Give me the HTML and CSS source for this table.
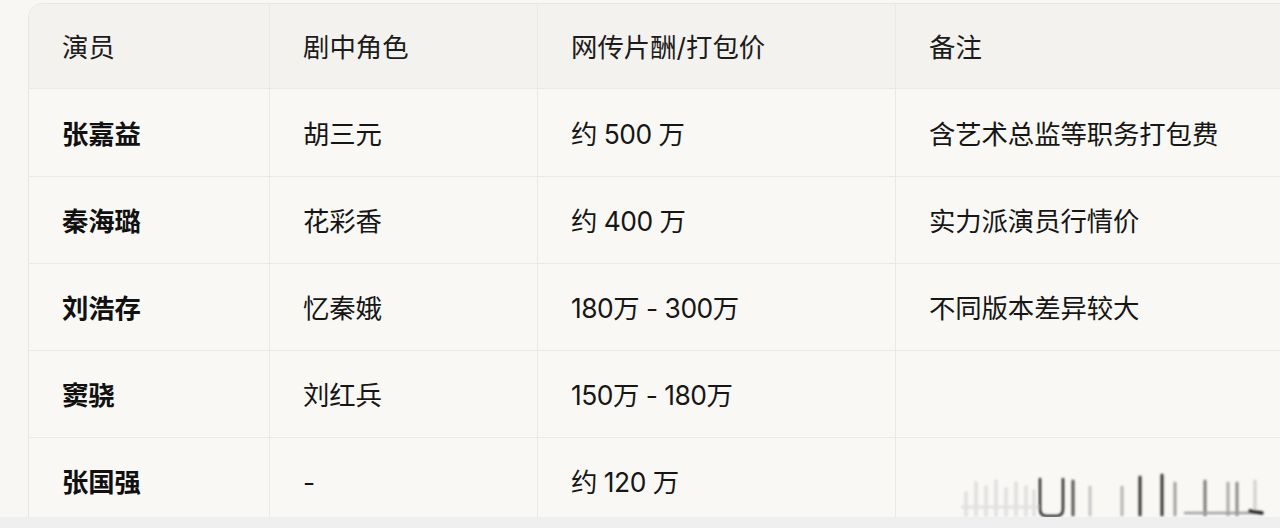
FILE: index.html
```html
<!DOCTYPE html>
<html lang="zh-CN">
<head>
<meta charset="utf-8">
<title>片酬表</title>
<link rel="stylesheet" href="styles.css">
</head>
<body>
<div class="page">
  <div class="table-wrap">
    <table class="fee-table">
      <colgroup>
        <col class="c1"><col class="c2"><col class="c3"><col class="c4">
      </colgroup>
      <thead>
        <tr><th>演员</th><th>剧中角色</th><th>网传片酬/打包价</th><th>备注</th></tr>
      </thead>
      <tbody>
        <tr class="first"><td class="name">张嘉益</td><td>胡三元</td><td class="price">约 500 万</td><td>含艺术总监等职务打包费</td></tr>
        <tr><td class="name">秦海璐</td><td>花彩香</td><td class="price">约 400 万</td><td>实力派演员行情价</td></tr>
        <tr><td class="name">刘浩存</td><td>忆秦娥</td><td class="price">180万 - 300万</td><td>不同版本差异较大</td></tr>
        <tr><td class="name">窦骁</td><td>刘红兵</td><td class="price">150万 - 180万</td><td></td></tr>
        <tr><td class="name">张国强</td><td>-</td><td class="price">约 120 万</td><td></td></tr>
      </tbody>
    </table>
    <svg class="watermark" width="310" height="50" viewBox="0 0 310 50" aria-hidden="true">
      <defs><filter id="bl" x="-20%" y="-20%" width="140%" height="140%"><feGaussianBlur stdDeviation="1.3"/></filter></defs>
      <g filter="url(#bl)" fill="none" stroke-linecap="round">
        <g stroke="#e2e2e2" stroke-width="4">
          <path d="M6 22 V44"/><path d="M16 12 V44"/><path d="M26 16 V44"/><path d="M36 10 V44"/><path d="M46 18 V44"/><path d="M56 12 V44"/><path d="M66 16 V44"/><path d="M74 20 V44"/>
          <path d="M2 36 H78" stroke-width="3"/>
        </g>
        <path d="M80 8 V38 Q80 45 87 45 H96 Q103 45 103 38 V8" stroke="#2a2a2a" stroke-width="2.5"/>
        <path d="M113 10 V44" stroke="#555" stroke-width="3"/>
        <path d="M130 16 V44" stroke="#c4c4c4" stroke-width="3"/>
        <path d="M162 16 V44" stroke="#b4b4b4" stroke-width="3"/>
        <path d="M180 6 V44" stroke="#333" stroke-width="3"/>
        <path d="M202 4 V44" stroke="#333" stroke-width="3"/>
        <path d="M215 12 V44" stroke="#a0a0a0" stroke-width="3"/>
        <path d="M245 10 V44" stroke="#7a7a7a" stroke-width="3"/>
        <path d="M268 12 V44" stroke="#aaa" stroke-width="3"/>
        <path d="M277 12 V44" stroke="#8a8a8a" stroke-width="3"/>
        <path d="M295 10 V40" stroke="#d0d0d0" stroke-width="3"/>
        <path d="M225 42 H300" stroke="#a0a0a0" stroke-width="2.5"/>
        <path d="M290 40 L302 42" stroke="#222" stroke-width="3.5"/>
      </g>
    </svg>
  </div>
  <div class="bottom-strip"></div>
</div>
</body>
</html>
```

FILE: styles.css
```css
html, body {
  margin: 0;
  padding: 0;
}
body {
  background: #f8f7f3;
  font-family: "Inter", "Noto Sans CJK SC", sans-serif;
  color: #161616;
}
.page {
  width: 1280px;
  height: 528px;
  overflow: hidden;
  display: flex;
  flex-direction: column;
}
.table-wrap {
  position: relative;
  height: 514px;
  margin-top: 3px;
  padding-left: 28px;
  overflow: hidden;
}
.fee-table {
  border-collapse: separate;
  border-spacing: 0;
  width: 1300px;
  table-layout: fixed;
  background: #f9f8f5;
  border-top: 1px solid #e8e6e1;
  border-left: 1px solid #e8e6e1;
  border-top-left-radius: 15px;
  font-size: 26.4px;
  line-height: 1;
}
.c1 { width: 241px; }
.c2 { width: 268px; }
.c3 { width: 358px; }
.c4 { width: 433px; }
.fee-table th,
.fee-table td {
  text-align: left;
  padding: 3px 0 0 33px;
  border-right: 1px solid #ebe9e4;
  border-bottom: 1px solid #ebe9e4;
  white-space: nowrap;
}
.fee-table th {
  height: 81px;
  background: #f3f2ee;
  font-weight: 400;
  color: #1c1c1c;
}
.fee-table th:first-child {
  border-top-left-radius: 14px;
}
.fee-table td {
  height: 83px;
  letter-spacing: -0.1px;
}
.fee-table tr.first td {
  height: 84px;
}
.fee-table td.price {
  letter-spacing: -0.5px;
}
.fee-table td.name {
  font-weight: 700;
  color: #111;
}
.watermark {
  position: absolute;
  left: 960px;
  top: 468px;
}
.bottom-strip {
  height: 11px;
  background: #efefef;
}
```
